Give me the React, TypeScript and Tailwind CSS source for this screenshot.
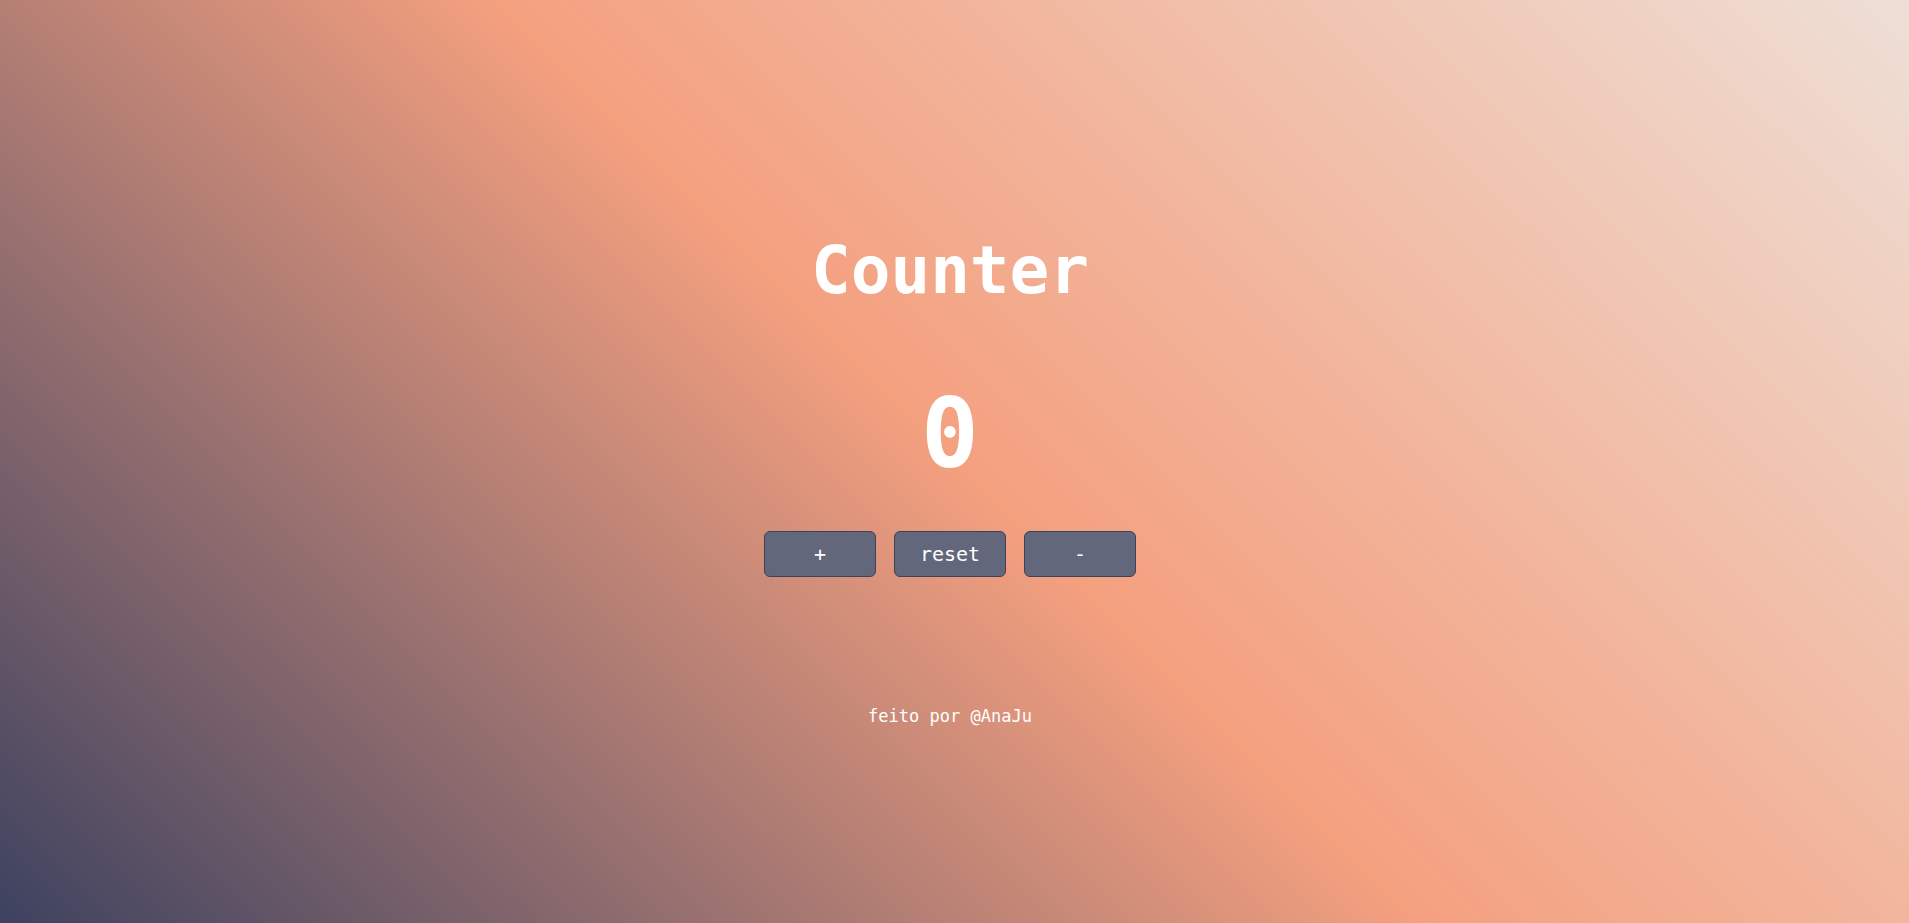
import React, { useState } from 'react'

const btn =
  "w-[112px] h-[46px] rounded-[6px] bg-[#62677c] border border-[#3d4258] text-white text-[20px] leading-none flex items-center justify-center cursor-pointer hover:bg-[#555a70]";

const App = () => {
  const [count, setCount] = useState(0);

  return (
    <main className="w-full h-[923px] overflow-hidden bg-[linear-gradient(45deg,#3d4260_0%,#f4a07f_50%,#eedfd6_100%)] font-['DejaVu_Sans_Mono','Liberation_Mono',monospace] text-white">
      <div className="flex flex-col items-center pr-[9px] pt-[238px]">
        <h1 className="text-[66px] font-bold leading-none h-[68px]">Counter</h1>
        <div className="mt-[80px] text-[96px] font-bold leading-none h-[96px]">{count}</div>
        <div className="mt-[49px] flex flex-row gap-[18px]">
          <button className={btn} onClick={() => setCount(count + 1)}>+</button>
          <button className={btn} onClick={() => setCount(0)}>reset</button>
          <button className={btn} onClick={() => setCount(count - 1)}>-</button>
        </div>
        <p className="mt-[131px] text-[17px] leading-none">feito por @AnaJu</p>
      </div>
    </main>
  );
}

export default App
